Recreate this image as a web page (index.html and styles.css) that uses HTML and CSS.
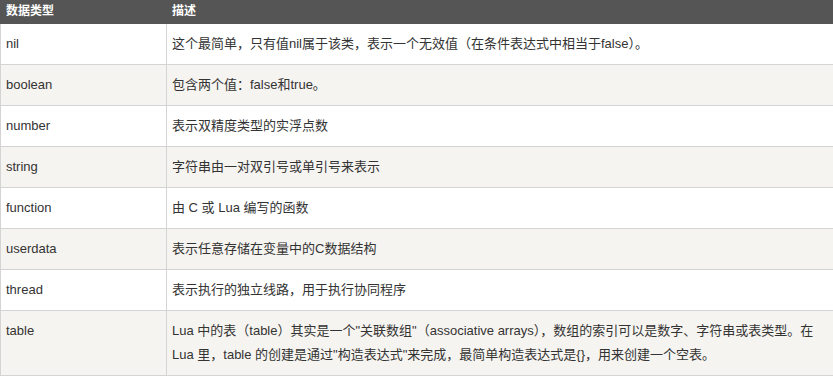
FILE: index.html
```html
<!DOCTYPE html>
<html lang="zh">
<head>
<meta charset="utf-8">
<title>Lua 数据类型</title>
<link rel="stylesheet" href="styles.css">
</head>
<body>
<table class="ref">
  <thead>
    <tr><th class="c1">数据类型</th><th>描述</th></tr>
  </thead>
  <tbody>
    <tr><td>nil</td><td>这个最简单，只有值nil属于该类，表示一个无效值（在条件表达式中相当于false）。</td></tr>
    <tr><td>boolean</td><td>包含两个值：false和true。</td></tr>
    <tr><td>number</td><td>表示双精度类型的实浮点数</td></tr>
    <tr><td>string</td><td>字符串由一对双引号或单引号来表示</td></tr>
    <tr><td>function</td><td>由 C 或 Lua 编写的函数</td></tr>
    <tr><td>userdata</td><td>表示任意存储在变量中的C数据结构</td></tr>
    <tr><td>thread</td><td>表示执行的独立线路，用于执行协同程序</td></tr>
    <tr><td>table</td><td>Lua 中的表（table）其实是一个"关联数组"（associative arrays），数组的索引可以是数字、字符串或表类型。在 Lua 里，table 的创建是通过"构造表达式"来完成，最简单构造表达式是{}，用来创建一个空表。</td></tr>
  </tbody>
</table>
</body>
</html>
```

FILE: styles.css
```css
html, body {
  margin: 0;
  padding: 0;
  background: #fff;
}
body {
  width: 833px;
  overflow: hidden;
}
.ref {
  border-collapse: collapse;
  width: 834px;
  table-layout: fixed;
  font-family: "Liberation Sans", Arial, "Noto Sans CJK SC", sans-serif;
  font-size: 13px;
  color: #333;
  border: 1px solid #d4d4d4;
  border-top: 0;
}
.ref th {
  background: #555;
  color: #fff;
  font-weight: bold;
  text-align: left;
  line-height: 23px;
  height: 23px;
  padding: 0 5px;
  border: 1px solid #555;
  border-top: 0;
  font-size: 12px;
}
.ref th.c1 {
  width: 155px;
}
.ref td {
  padding: 8px 5px;
  line-height: 24px;
  border: 1px solid #d4d4d4;
  vertical-align: top;
}
.ref tbody tr:nth-child(even) td {
  background: #f6f4f0;
}
```
